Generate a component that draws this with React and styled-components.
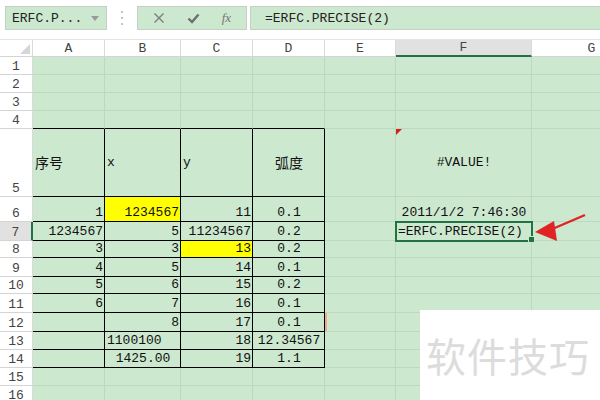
import React from "react";
import styled, { createGlobalStyle } from "styled-components";

const GlobalStyle = createGlobalStyle`
  html, body { margin: 0; padding: 0; background: #fff; }
  body { overflow: hidden; }
`;

const GREEN = "#cce8cf";
const GRID = "#bcd8c0";

const Page = styled.div`
  position: relative;
  width: 600px;
  height: 400px;
  overflow: hidden;
  background: #fff;
  font-family: "Liberation Mono", "Noto Sans CJK SC", monospace;
`;

const Toolbar = styled.div`
  box-sizing: border-box;
  height: 40px;
  display: flex;
  align-items: flex-start;
  padding: 6px 0 0 5px;
  border-bottom: 1px solid #e4e4e4;
`;

const Box = styled.div`
  box-sizing: border-box;
  height: 24px;
  background: ${GREEN};
  border: 1px solid #c4cfc6;
  display: flex;
  align-items: center;
  font-size: 13px;
  color: #222;
`;

const NameBox = styled(Box)`
  width: 102px;
  padding: 0 7px 0 6px;
  justify-content: space-between;
`;

const Caret = styled.span`
  width: 0;
  height: 0;
  border-left: 4px solid transparent;
  border-right: 4px solid transparent;
  border-top: 5px solid #9a9a9a;
`;

const Grip = styled.div`
  width: 30px;
  height: 24px;
  display: flex;
  align-items: center;
  justify-content: center;
`;

const ButtonBox = styled(Box)`
  width: 110px;
  margin-right: 3px;
  justify-content: space-around;
  padding: 0 4px;
`;

const Fx = styled.span`
  font-family: "Liberation Serif", serif;
  font-style: italic;
  font-size: 13px;
  color: #777;
`;

const FormulaBox = styled(Box)`
  flex: 1;
  margin-right: -2px;
  padding-left: 14px;
`;

const Sheet = styled.div`
  display: grid;
  grid-template-columns: 33px 72px 76px 72px 72px 71px 136px 120px;
  grid-template-rows: 17px 18px 18px 18px 18px 68px 25px 19px 17px 19px 17px 19px 19px 18px 18px 18px 18px;
`;

const Head = styled.div`
  box-sizing: border-box;
  background: ${(p) => (p.$active ? "#e1e1e1" : "#fff")};
  border-right: ${(p) => (p.$row && p.$active ? "2px solid #217346" : "1px solid #dadada")};
  border-bottom: ${(p) => (!p.$row && p.$active ? "2px solid #217346" : "1px solid #d4d4d4")};
  display: flex;
  justify-content: center;
  align-items: ${(p) => (p.$row ? "flex-end" : "center")};
  font-size: 13px;
  line-height: 15px;
  color: #444;
  position: relative;
`;

const Cell = styled.div`
  box-sizing: border-box;
  position: relative;
  background: ${(p) => p.$fill || GREEN};
  border-right: 1px solid ${(p) => (p.$br ? "#000" : GRID)};
  border-bottom: 1px solid ${(p) => (p.$bb ? "#000" : GRID)};
  display: flex;
  justify-content: ${(p) => p.$align || "flex-end"};
  align-items: ${(p) => (p.$mid ? "center" : "flex-end")};
  padding: 0 1px 1px 2px;
  font-size: 13px;
  line-height: 15px;
  color: #111;
  white-space: nowrap;
  box-shadow: ${(p) => (p.$mark ? "inset 2px 0 0 #f2a88a" : "none")};

  ${(p) =>
    p.$flag &&
    `&::before {
      content: "";
      position: absolute;
      left: 0;
      top: 0;
      border-top: 6px solid #d81e1e;
      border-right: 6px solid transparent;
    }`}

  ${(p) =>
    p.$selected &&
    `&::after {
      content: "";
      position: absolute;
      left: -1px;
      top: -1px;
      right: -2px;
      bottom: -2px;
      border: 2px solid #217346;
      z-index: 2;
    }`}
`;

const Handle = styled.span`
  position: absolute;
  right: -4px;
  bottom: -3px;
  width: 5px;
  height: 5px;
  background: #217346;
  border: 1px solid ${GREEN};
  z-index: 3;
`;

const Cjk = styled.span`
  font-family: "Noto Sans CJK SC", sans-serif;
  font-size: 14px;
`;

const Watermark = styled.div`
  position: absolute;
  left: 420px;
  top: 310px;
  width: 180px;
  height: 90px;
  background: #fff;
  display: flex;
  align-items: center;
  padding-left: 6px;
  box-sizing: border-box;
  font-family: "Noto Sans CJK SC", sans-serif;
  font-size: 40px;
  color: #dcdcdc;
  letter-spacing: 1px;
`;

const ArrowSvg = styled.svg`
  position: absolute;
  left: 530px;
  top: 210px;
`;

const COLS = ["A", "B", "C", "D", "E", "F", "G"];

const c = (v, o = {}) => ({ v, ...o });
const ROWS = [
  { n: 1, cells: [] },
  { n: 2, cells: [] },
  { n: 3, cells: [] },
  { n: 4, cells: [], bottomBlack: true },
  {
    n: 5,
    mid: true,
    cells: [
      c(<Cjk>序号</Cjk>, { align: "flex-start" }),
      c("x", { align: "flex-start" }),
      c("y", { align: "flex-start" }),
      c(<Cjk>弧度</Cjk>, { align: "center" }),
      c(""),
      c("#VALUE!", { align: "center", flag: true }),
    ],
  },
  {
    n: 6,
    cells: [
      c("1"),
      c("1234567", { fill: "#ffff00" }),
      c("11"),
      c("0.1", { align: "center" }),
      c(""),
      c("2011/1/2 7:46:30", { align: "center" }),
    ],
  },
  {
    n: 7,
    active: true,
    cells: [
      c("1234567"),
      c("5"),
      c("11234567"),
      c("0.2", { align: "center" }),
      c(""),
      c("=ERFC.PRECISE(2)", { align: "flex-start", selected: true }),
    ],
  },
  { n: 8, cells: [c("3"), c("3"), c("13", { fill: "#ffff00" }), c("0.2", { align: "center" })] },
  { n: 9, cells: [c("4"), c("5"), c("14"), c("0.1", { align: "center" })] },
  { n: 10, cells: [c("5"), c("6"), c("15"), c("0.2", { align: "center" })] },
  { n: 11, cells: [c("6"), c("7"), c("16"), c("0.1", { align: "center" })] },
  { n: 12, cells: [c(""), c("8"), c("17"), c("0.1", { align: "center" }), c("", { mark: true })] },
  { n: 13, cells: [c(""), c("1100100", { align: "flex-start" }), c("18"), c("12.34567", { align: "center" })] },
  { n: 14, cells: [c(""), c("1425.00", { align: "center" }), c("19"), c("1.1", { align: "center" })] },
  { n: 15, cells: [] },
  { n: 16, cells: [] },
];

const XIcon = () => (
  <svg width="12" height="12" viewBox="0 0 12 12">
    <path d="M1.5 1.5 L10.5 10.5 M10.5 1.5 L1.5 10.5" stroke="#7d7d7d" strokeWidth="1.4" fill="none" />
  </svg>
);

const CheckIcon = () => (
  <svg width="13" height="12" viewBox="0 0 13 12">
    <path d="M1.5 6.5 L5 10 L11.5 2.5" stroke="#6f6f6f" strokeWidth="2.4" fill="none" />
  </svg>
);

const Dots = () => (
  <svg width="4" height="16" viewBox="0 0 4 16">
    <rect x="1" y="1" width="2" height="2" fill="#c4c4c4" />
    <rect x="1" y="7" width="2" height="2" fill="#c4c4c4" />
    <rect x="1" y="13" width="2" height="2" fill="#c4c4c4" />
  </svg>
);

const Corner = () => (
  <svg width="33" height="17" viewBox="0 0 33 17" style={{ position: "absolute", left: 0, top: 0 }}>
    <polygon points="30,4 30,14 20,14" fill="#d6d6d6" />
  </svg>
);

export default function App() {
  return (
    <Page>
      <GlobalStyle />
      <Toolbar>
        <NameBox>
          <span>ERFC.P...</span>
          <Caret />
        </NameBox>
        <Grip>
          <Dots />
        </Grip>
        <ButtonBox>
          <XIcon />
          <CheckIcon />
          <Fx>fx</Fx>
        </ButtonBox>
        <FormulaBox>=ERFC.PRECISE(2)</FormulaBox>
      </Toolbar>

      <Sheet>
        <Head>
          <Corner />
        </Head>
        {COLS.map((col) => (
          <Head key={col} $active={col === "F"}>
            {col}
          </Head>
        ))}

        {ROWS.map((row) => {
          const inTable = row.n >= 5 && row.n <= 14;
          return (
            <React.Fragment key={row.n}>
              <Head $row $active={row.active}>
                {row.n}
              </Head>
              {COLS.map((col, i) => {
                const cell = row.cells[i] || { v: "" };
                const tableCol = i < 4;
                return (
                  <Cell
                    key={col}
                    $fill={cell.fill}
                    $align={cell.align}
                    $mid={row.mid}
                    $br={inTable && tableCol}
                    $bb={(inTable || row.bottomBlack) && tableCol}
                    $flag={cell.flag}
                    $mark={cell.mark}
                    $selected={cell.selected}
                  >
                    {cell.v}
                    {cell.selected && <Handle />}
                  </Cell>
                );
              })}
            </React.Fragment>
          );
        })}
      </Sheet>

      <ArrowSvg width="70" height="40" viewBox="0 0 70 40">
        <line x1="55" y1="5" x2="20" y2="20" stroke="#e02424" strokeWidth="2.4" />
        <polygon points="5,22 24,11 27,31" fill="#e02424" />
      </ArrowSvg>

      <Watermark>软件技巧</Watermark>
    </Page>
  );
}
